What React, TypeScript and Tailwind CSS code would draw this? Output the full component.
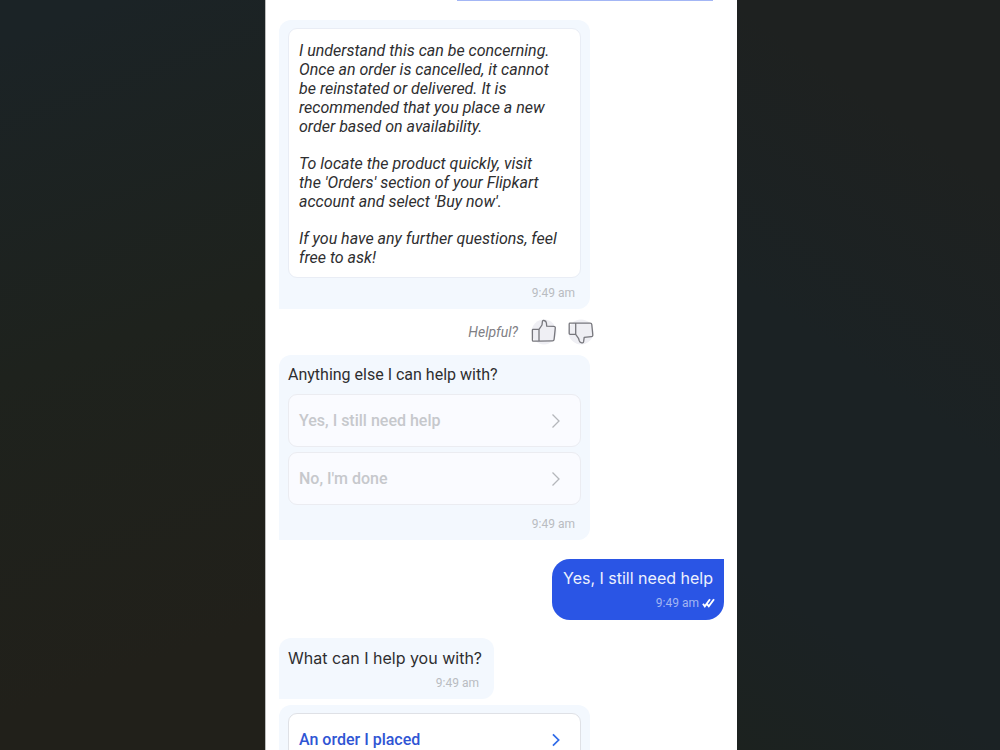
import type { ReactNode } from "react";

const fonts = {
  roboto: "font-[Roboto,sans-serif]",
  inter: "font-[Inter,sans-serif]",
};

function Time() {
  return (
    <p className="px-[6px] text-right text-xs leading-4 text-[#b9bcc1]">
      9:49 am
    </p>
  );
}

function BotBubble({
  className = "",
  children,
}: {
  className?: string;
  children: ReactNode;
}) {
  return (
    <div
      className={`rounded-t-[12px] rounded-br-[12px] bg-[#f3f8fe] px-[9px] pt-2 pb-2 ${className}`}
    >
      {children}
    </div>
  );
}

function Chevron({ className }: { className: string }) {
  return (
    <svg viewBox="0 0 10 16" fill="none" className={className}>
      <path d="M1.5 1.5 8 8l-6.500 6.500" stroke="currentColor" />
    </svg>
  );
}

function Option({ label, disabled }: { label: string; disabled?: boolean }) {
  return (
    <button
      type="button"
      disabled={disabled}
      className={`flex h-[53px] w-full items-center justify-between rounded-[9px] border pr-[19px] pl-[10px] text-left text-base leading-5 font-medium ${
        disabled
          ? "border-[#ebecf1] bg-[#fafbff] text-[#c6c8cc]"
          : "border-[#dfe1e6] bg-white text-[#2f55d4]"
      }`}
    >
      {label}
      <Chevron
        className={
          disabled
            ? "h-4 w-[10px] stroke-[1.3] text-[#b4b6bb]"
            : "h-[14px] w-[10px] stroke-2 text-[#2f6be8]"
        }
      />
    </button>
  );
}

function ThumbUp() {
  return (
    <svg viewBox="0 0 26 26" fill="none" className="h-[26px] w-[26px]">
      <circle cx="13" cy="13" r="12.500" fill="#efeff4" />
      <path
        d="M2 10.300h6v11.900H2.300q-.9 0-.9-.9V11q0-.7.6-.7ZM8 10.300 11 6l.4-3.500c.1-1 .9-1.200 1.700-1 1.400.3 2.200 1.200 2.300 2.500l.3 3.200 7.200.2c1 0 1.500.6 1.400 1.500l-1.200 11.500c-.1 1-.6 1.500-1.600 1.500L8 22.200"
        stroke="#77777d"
        strokeWidth="1.300"
        strokeLinejoin="round"
      />
    </svg>
  );
}

function ThumbDown() {
  return (
    <svg viewBox="0 0 26 26" fill="none" className="h-[26px] w-[26px]">
      <circle cx="13" cy="13" r="12.500" fill="#efeff4" />
      <path
        d="M2 4.200h5.700v11.200H2.100q-.9 0-.9-.8V5q0-.8.8-.8ZM7.700 4.200h14.500c1 0 1.500.5 1.600 1.400l1 10.300c.1 1-.4 1.600-1.400 1.700l-7.200.8-.6 4.300c-.2 1-1 1.400-1.900 1.200-1.200-.2-2-.9-2.400-2l-.8-2.600-2.800-3.900"
        stroke="#77777d"
        strokeWidth="1.300"
        strokeLinejoin="round"
      />
    </svg>
  );
}

function DoubleCheck() {
  return (
    <svg viewBox="0 0 13 10" fill="none" className="h-[10px] w-[13px]">
      <path
        d="M1 5.800 2.800 8.300 8 1.300M5 6.200l1.800 2.100L12 1.300"
        stroke="white"
        strokeWidth="1.900"
      />
    </svg>
  );
}

export default function App() {
  return (
    <div
      className={`grid h-screen grid-cols-[265fr_472fr_263fr] overflow-hidden bg-[#1e201e] ${fonts.roboto}`}
    >
      <div className="bg-linear-[160deg,#1b2326_5%,#1e221d_45%,#21201a_85%]" />

      <main className="flex flex-col items-start overflow-hidden border-l border-[#bdbdbd] bg-white px-[13px]">
        {/* tail end of the previous message */}
        <div className="mr-[11px] h-px w-[256px] shrink-0 self-end bg-[#a3b6f5]" />

        <BotBubble className="mt-[19px] w-[311px]">
          <div className="flex flex-col gap-[18px] rounded-[9px] border border-[#e9edf5] bg-white pt-3 pr-2 pb-[10px] pl-[10px] text-base leading-[19px] text-[#2e2e30] italic">
            <p>
              I understand this can be concerning.
              <br />
              Once an order is cancelled, it cannot
              <br />
              be reinstated or delivered. It is
              <br />
              recommended that you place a new
              <br />
              order based on availability.
            </p>
            <p>
              To locate the product quickly, visit
              <br />
              the 'Orders' section of your Flipkart
              <br />
              account and select 'Buy now'.
            </p>
            <p>
              If you have any further questions, feel
              <br />
              free to ask!
            </p>
          </div>
          <div className="pt-[7px]">
            <Time />
          </div>
        </BotBubble>

        <div className="flex w-[315px] items-center justify-end gap-[11px] pt-[10px] pb-[10px]">
          <span className="mr-[2px] text-sm leading-5 text-[#7f8085] italic">
            Helpful?
          </span>
          <button type="button" aria-label="Helpful">
            <ThumbUp />
          </button>
          <button type="button" aria-label="Not helpful">
            <ThumbDown />
          </button>
        </div>

        <BotBubble className="w-[311px]">
          <p className="pt-[2px] text-base leading-5 text-[#2e2e30]">
            Anything else I can help with?
          </p>
          <div className="flex flex-col gap-[5px] pt-[9px] pb-[11px]">
            <Option label="Yes, I still need help" disabled />
            <Option label="No, I'm done" disabled />
          </div>
          <Time />
        </BotBubble>

        <div className="mt-[19px] min-w-[172px] self-end rounded-b-[18px] rounded-tl-[18px] bg-[#2a55e5] px-[9px] pt-[9px] pb-[9px]">
          <p
            className={`text-center text-base leading-5 text-[#eef1fd] ${fonts.inter}`}
          >
            Yes, I still need help
          </p>
          <p className="flex items-center justify-end gap-[3px] pt-[7px] text-xs leading-4 text-[#a3b5f2]">
            9:49 am
            <DoubleCheck />
          </p>
        </div>

        <BotBubble className="mt-[18px] min-w-[215px]">
          <p
            className={`pt-[2px] pb-[7px] text-base leading-5 text-[#2e2e30] ${fonts.inter}`}
          >
            What can I help you with?
          </p>
          <Time />
        </BotBubble>

        <BotBubble className="mt-[6px] w-[311px]">
          <Option label="An order I placed" />
        </BotBubble>
      </main>

      <div className="bg-linear-[215deg,#1e2120_20%,#1b2224_50%,#1b2224_80%,#1c221f]" />
    </div>
  );
}
